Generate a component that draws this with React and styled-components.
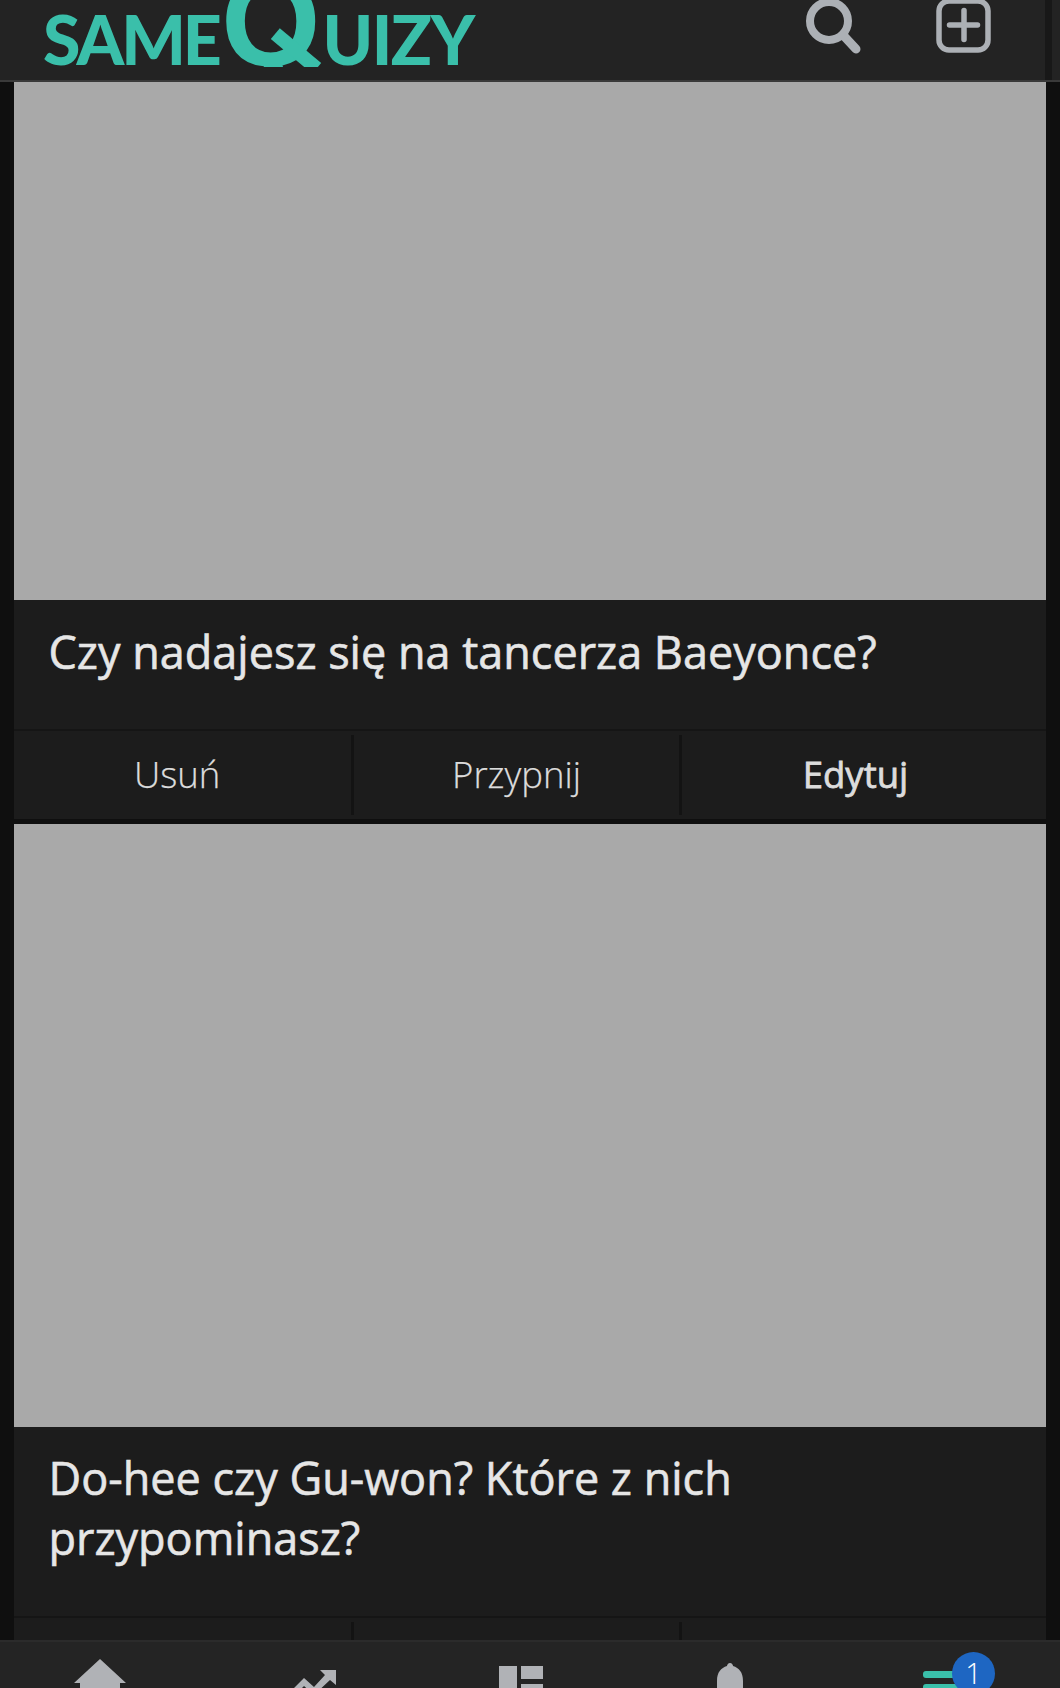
import React from "react";
import styled, { createGlobalStyle } from "styled-components";

const Global = createGlobalStyle`
  html, body { margin: 0; padding: 0; background: #0f0f0f; }
  * { box-sizing: border-box; }
`;

const Page = styled.div`
  width: 1060px;
  height: 1688px;
  display: flex;
  flex-direction: column;
  overflow: hidden;
  position: relative;
  background: #0f0f0f;
  font-family: "Open Sans", "Noto Sans", sans-serif;
`;

const Header = styled.header`
  flex: 0 0 82px;
  height: 82px;
  background: #232323;
  border-bottom: 2px solid #3a3a3a;
  display: flex;
  align-items: flex-start;
  overflow: hidden;
  padding-left: 43px;
  position: relative;
`;

const Logo = styled.div`
  display: flex;
  align-items: baseline;
  color: #3abfaa;
  font-family: Lato, sans-serif;
  font-weight: 900;
`;

const LogoWord = styled.span`
  font-size: 68px;
  line-height: 78px;
  letter-spacing: ${(p) => p.$spacing}px;
`;

const LogoQ = styled.span`
  font-family: "Liberation Sans", sans-serif;
  font-weight: 700;
  font-size: 128px;
  line-height: 0;
  margin: 0 2px 0 2px;
  position: relative;
  transform: translateY(1px);
  clip-path: inset(-100px -20px -45px -20px);

  &::after {
    content: "";
    position: absolute;
    left: 48px;
    top: 22px;
    width: 54px;
    height: 14px;
    background: currentColor;
    transform: rotate(40deg);
  }
`;

const HeaderIcons = styled.div`
  margin-left: auto;
  margin-right: 67px;
  display: flex;
  align-items: flex-start;
  gap: 73px;
`;

const HeaderIcon = styled.svg`
  display: block;
  color: #acb0b5;
  overflow: visible;
`;

const ScrollStrip = styled.div`
  position: absolute;
  top: 0;
  left: 1045px;
  width: 7px;
  height: 90px;
  background: #181818;
`;

const Feed = styled.main`
  flex: 1 1 auto;
  min-height: 0;
  overflow: hidden;
  padding: 0 14px 0 13.5px;
  display: flex;
  flex-direction: column;
  gap: 5px;
`;

const Card = styled.article`
  background: #1c1c1c;
  flex: none;
`;

const Thumb = styled.div`
  height: ${(p) => p.$h}px;
  background: #a9a9a9;
`;

const Title = styled.h2`
  margin: 0;
  padding: ${(p) => p.$pad};
  color: #e6e6e6;
  font-size: 45px;
  line-height: 60px;
  font-weight: 400;
  -webkit-text-stroke: 0.6px #e6e6e6;
  border-bottom: 2px solid #151515;
`;

const Actions = styled.div`
  display: grid;
  grid-template-columns: 340.5px 328px 1fr;
  height: 88px;
  align-items: stretch;
`;

const Action = styled.div`
  display: flex;
  align-items: center;
  justify-content: center;
  padding: 0 ${(p) => p.$inset || 0}px 2px 0;
  font-size: 36.5px;
  color: #dcdcdc;
  font-weight: ${(p) => (p.$strong ? 400 : 300)};
  -webkit-text-stroke: ${(p) => (p.$strong ? "0.8px" : "0.25px")} #dcdcdc;
  border-right: ${(p) => (p.$divider ? "3px solid #131313" : "0")};
  margin: 4px 0;
`;

const BottomNav = styled.nav`
  flex: 0 0 48px;
  background: #242424;
  border-top: 2px solid #2b2b2b;
  display: grid;
  grid-template-columns: repeat(5, 210px);
  overflow: hidden;
`;

const NavCell = styled.div`
  display: flex;
  justify-content: center;
  position: relative;
  padding-top: ${(p) => p.$top}px;
  padding-right: ${(p) => p.$trim || 0}px;
  padding-left: ${(p) => p.$push || 0}px;
  margin-left: -5px;
`;

const NavGlyph = styled.svg`
  display: block;
  color: #b0b2b6;
  flex: none;
`;

const Badge = styled.span`
  position: absolute;
  top: 10px;
  left: 117px;
  width: 43px;
  height: 43px;
  border-radius: 50%;
  background: #1e66c2;
  color: #fff;
  font-size: 29px;
  font-weight: 300;
  text-align: center;
  line-height: 42px;
`;

const cardData = [
  { h: 518, pad: "22px 35px 47px", title: "Czy nadajesz się na tancerza Baeyonce?" },
  { h: 603, pad: "21px 35px 48px", title: "Do-hee czy Gu-won? Które z nich przypominasz?" },
];

export default function App() {
  return (
    <Page>
      <Global />
      <Header>
        <Logo>
          <LogoWord $spacing={-3}>SAME</LogoWord>
          <LogoQ>Q</LogoQ>
          <LogoWord $spacing={-1.5}>UIZY</LogoWord>
        </Logo>
        <HeaderIcons>
          <HeaderIcon width="56" height="54" viewBox="0 0 56 54" fill="none" stroke="currentColor">
            <circle cx="24" cy="21" r="19" strokeWidth="8" />
            <path d="M38 35 L51 49" strokeWidth="9" strokeLinecap="round" />
          </HeaderIcon>
          <HeaderIcon width="59" height="54" viewBox="0 0 59 54" fill="none" stroke="currentColor">
            <rect x="5" y="1" width="49" height="49" rx="10" strokeWidth="5.5" />
            <path d="M30 10.5 V39.5 M15.5 25 H43.5" strokeWidth="5.5" strokeLinecap="round" />
          </HeaderIcon>
        </HeaderIcons>
        <ScrollStrip />
      </Header>
      <Feed>
        {cardData.map((c) => (
          <Card key={c.title}>
            <Thumb $h={c.h} />
            <Title $pad={c.pad}>{c.title}</Title>
            <Actions>
              <Action $divider $inset={10}>Usuń</Action>
              <Action $divider>Przypnij</Action>
              <Action $strong $inset={17}>Edytuj</Action>
            </Actions>
          </Card>
        ))}
      </Feed>
      <BottomNav>
        <NavCell $top={17} $trim={6}>
          <NavGlyph width="54" height="40" viewBox="0 0 54 40" fill="currentColor">
            <path d="M27 0 L53 24 L47 24 L47 40 L7 40 L7 24 L1 24 Z" />
          </NavGlyph>
        </NavCell>
        <NavCell $top={28} $push={1}>
          <NavGlyph width="46" height="30" viewBox="0 0 46 30" fill="currentColor">
            <path d="M30 0 H46 V15 L40 10 L24 25 L14 16 L4 26 L0 22 L14 8 L24 17 L35 5 Z" />
          </NavGlyph>
        </NavCell>
        <NavCell $top={24} $trim={4}>
          <NavGlyph width="44" height="30" viewBox="0 0 44 30" fill="currentColor">
            <path d="M0 0 H18 V30 H0 Z M22 0 H44 V13 H22 Z M22 18 H44 V30 H22 Z" />
          </NavGlyph>
        </NavCell>
        <NavCell $top={21} $trim={6}>
          <NavGlyph width="30" height="30" viewBox="0 0 30 30" fill="currentColor">
            <path d="M15 0 C17 0 18 2 18 3 C24 5 28 9 28 18 L28 30 L2 30 L2 18 C2 9 6 5 12 3 C12 2 13 0 15 0 Z" />
          </NavGlyph>
        </NavCell>
        <NavCell $top={29} $push={6}>
          <NavGlyph width="46" height="24" viewBox="0 0 46 24" fill="#3abfaa">
            <rect x="0" y="0" width="46" height="7" rx="3" />
            <rect x="0" y="13" width="46" height="7" rx="3" />
          </NavGlyph>
          <Badge>1</Badge>
        </NavCell>
      </BottomNav>
    </Page>
  );
}
